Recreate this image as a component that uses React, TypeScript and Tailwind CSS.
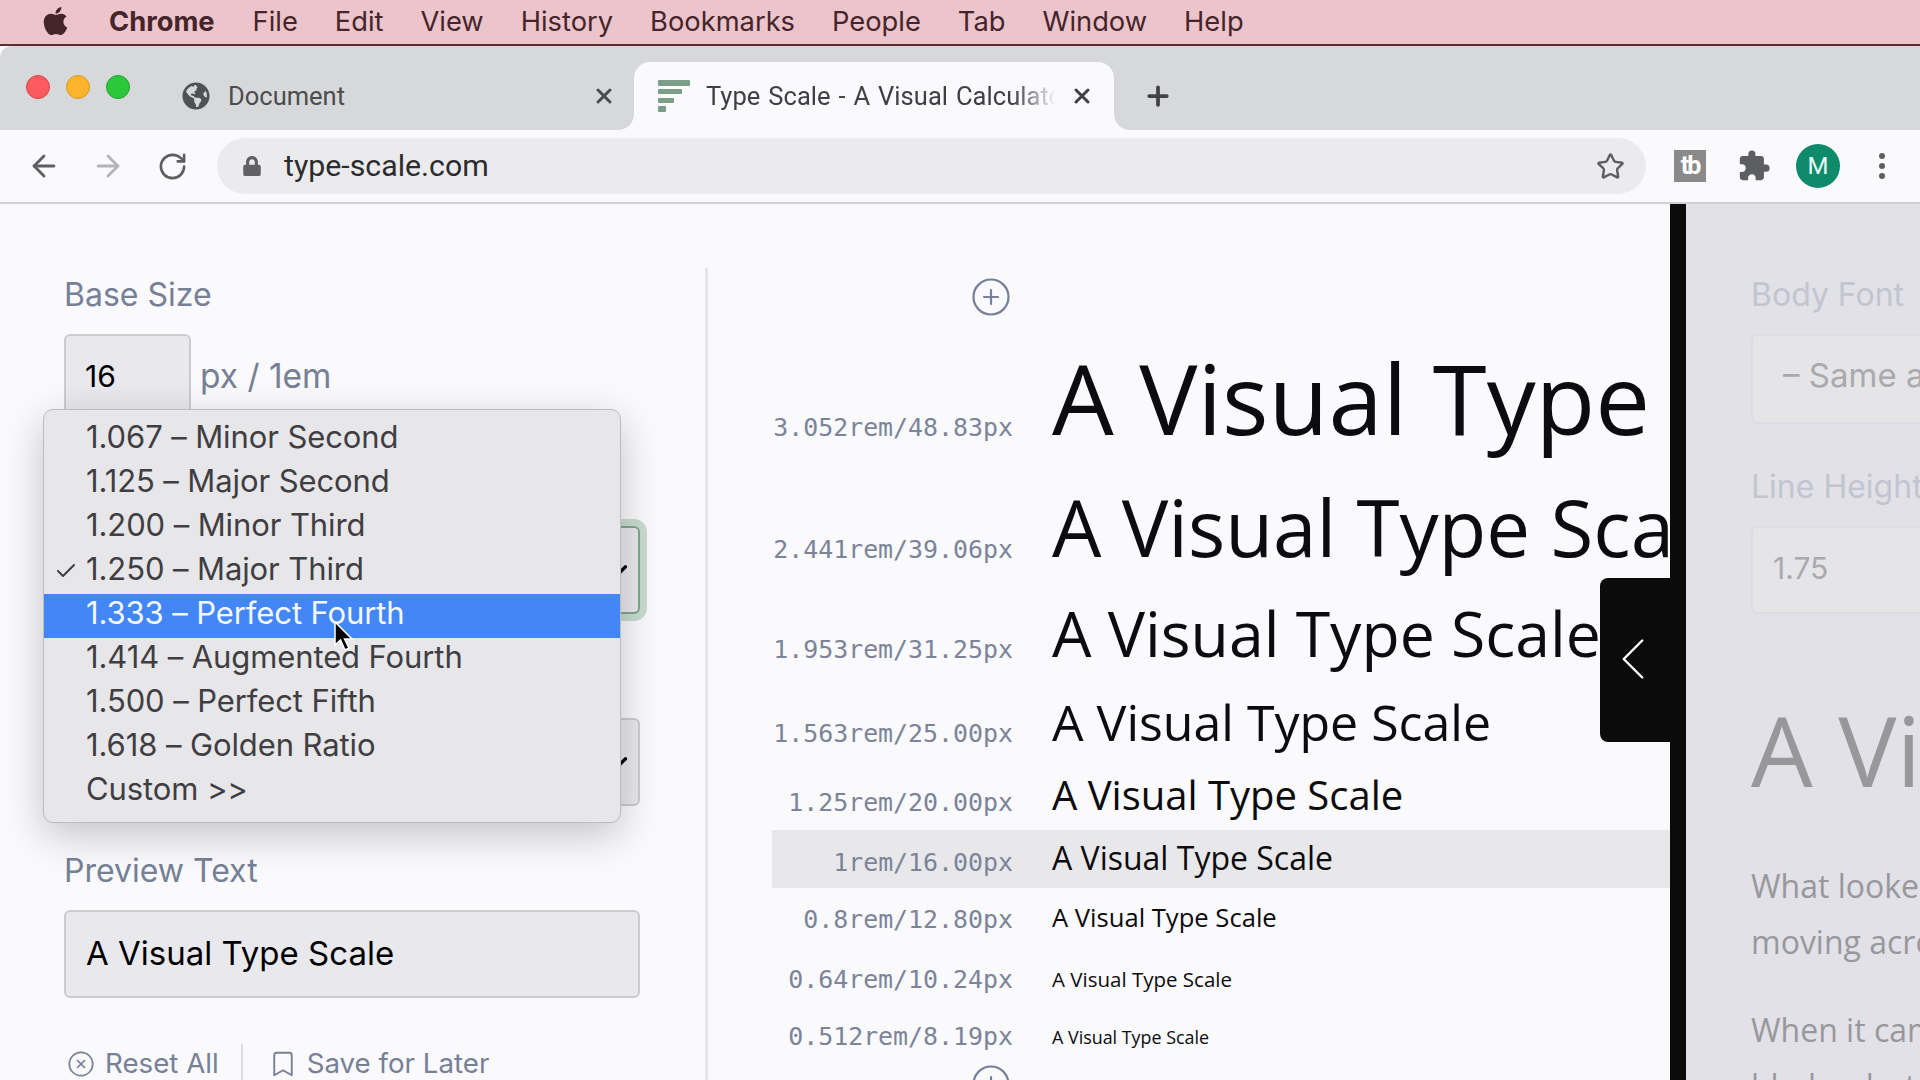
import React from "react";
import {
  ArrowLeft,
  ArrowRight,
  Bookmark,
  Check,
  ChevronDown,
  ChevronLeft,
  CirclePlus,
  CircleX,
  Plus,
  RotateCw,
  Star,
  X,
} from "lucide-react";
import { FaApple, FaGlobeAmericas, FaLock } from "react-icons/fa";
import { MdExtension } from "react-icons/md";

const menuItems = ["File", "Edit", "View", "History", "Bookmarks", "People", "Tab", "Window", "Help"];

const scaleOptions = [
  "1.067 – Minor Second",
  "1.125 – Major Second",
  "1.200 – Minor Third",
  "1.250 – Major Third",
  "1.333 – Perfect Fourth",
  "1.414 – Augmented Fourth",
  "1.500 – Perfect Fifth",
  "1.618 – Golden Ratio",
  "Custom >>",
];

const typeRows = [
  { label: "3.052rem/48.83px", row: "h-[140px]", text: "text-[97.7px] leading-[96px]" },
  { label: "2.441rem/39.06px", row: "h-[110px]", text: "text-[78.1px] leading-[75px]" },
  { label: "1.953rem/31.25px", row: "h-[90px]", text: "text-[62.5px] leading-[65px]" },
  { label: "1.563rem/25.00px", row: "h-[80px]", text: "text-[50px] leading-[65px]" },
  { label: "1.25rem/20.00px", row: "h-[60px]", text: "text-[40px] leading-[49px]" },
  { label: "1rem/16.00px", row: "h-[58px] bg-[#e8e8eb]", text: "text-[32px] leading-[55px]" },
  { label: "0.8rem/12.80px", row: "h-[59px]", text: "text-[25.6px] leading-[60px]" },
  { label: "0.64rem/10.24px", row: "h-[58px]", text: "text-[20.5px] leading-[64px]" },
  { label: "0.512rem/8.19px", row: "h-[58px]", text: "text-[17.9px] leading-[64px]" },
];

const poppins = "font-['Inter','Liberation_Sans',sans-serif]";

function Favicon() {
  return (
    <svg width="32" height="32" viewBox="0 0 32 32" className="shrink-0 fill-[#7a9e88]">
      <rect x="0" y="0" width="32" height="6" rx="1" />
      <rect x="0" y="9" width="24" height="5" rx="1" />
      <rect x="0" y="18" width="16" height="5" rx="1" />
      <rect x="0" y="26" width="8" height="6" rx="1" />
    </svg>
  );
}

function Cursor() {
  return (
    <svg width="24" height="32" viewBox="0 0 24 32" className="absolute left-[333px] top-[417px]">
      <path d="M2 1 L2 24 L7.5 19 L12 29 L16 27 L11.5 18 L19 18 Z" fill="#000" stroke="#fff" strokeWidth="1.5" />
    </svg>
  );
}

export default function App() {
  return (
    <div className="flex h-screen w-full flex-col overflow-hidden bg-[#faf9fc] font-['Roboto',sans-serif]">
      {/* mac menu bar */}
      <div className="flex h-[46px] shrink-0 items-center border-b-2 border-[#5a2e33] bg-[#ecc4cb] pl-[42px] font-['Inter',sans-serif] text-[27.3px] text-[#45252a]">
        <FaApple className="mb-[3px] mr-[40px] h-[32px] w-[27px]" />
        <span className="mr-[38px] font-bold">Chrome</span>
        <div className="flex gap-[37px]">
          {menuItems.map((item) => (
            <span key={item}>{item}</span>
          ))}
        </div>
      </div>

      {/* tab strip */}
      <div className="flex h-[84px] shrink-0 rounded-tl-xl bg-[#d6d8da]">
        <div className="flex w-[182px] items-center gap-[16px] pb-[2px] pl-[26px]">
          <span className="h-[24px] w-[24px] rounded-full border border-[#d9434a] bg-[#fd5b5f]" />
          <span className="h-[24px] w-[24px] rounded-full border border-[#d99a22] bg-[#fdb42d]" />
          <span className="h-[24px] w-[24px] rounded-full border border-[#22a32f] bg-[#2bc83c]" />
        </div>
        <div className="flex w-[452px] items-center pt-[16px] text-[25.5px] text-[#4b4c4e]">
          <FaGlobeAmericas className="h-[28px] w-[28px] shrink-0 text-[#505153]" />
          <span className="ml-[18px] flex-1">Document</span>
          <X className="mr-[18px] h-[24px] w-[24px]" strokeWidth={3} />
        </div>
        <div className="relative mt-[16px] flex h-[68px] w-[480px] items-center rounded-t-2xl bg-[#faf9fc] pl-[24px] text-[25.5px] tracking-[0.05px] text-[#3f4043] [word-spacing:1.5px]">
          <div className="absolute bottom-0 left-[-16px] h-[16px] w-[16px] bg-[#faf9fc]">
            <div className="h-full w-full rounded-br-2xl bg-[#d6d8da]" />
          </div>
          <div className="absolute bottom-0 right-[-16px] h-[16px] w-[16px] bg-[#faf9fc]">
            <div className="h-full w-full rounded-bl-2xl bg-[#d6d8da]" />
          </div>
          <Favicon />
          <span className="ml-[16px] w-[350px] overflow-hidden whitespace-nowrap [mask-image:linear-gradient(to_right,black_88%,transparent)]">
            Type Scale - A Visual Calculator
          </span>
          <X className="ml-[14px] h-[24px] w-[24px]" strokeWidth={3} />
        </div>
        <div className="flex flex-1 items-center pl-[29px] pt-[16px] text-[#404144]">
          <Plus className="h-[30px] w-[30px]" strokeWidth={3} />
        </div>
      </div>

      {/* toolbar */}
      <div className="flex h-[74px] shrink-0 items-center border-b-2 border-[#d0d0d4] bg-[#faf9fc]">
        <div className="flex w-[217px] items-center pl-[27px]">
          <ArrowLeft className="h-[34px] w-[34px] text-[#5d5e60]" strokeWidth={2} />
          <ArrowRight className="ml-[30px] h-[34px] w-[34px] text-[#b4b5b7]" strokeWidth={2} />
          <RotateCw className="ml-[32px] h-[31px] w-[31px] text-[#5d5e60]" strokeWidth={2} />
        </div>
        <div className="flex h-[56px] w-[1429px] items-center rounded-full bg-[#ebebed] pl-[26px] pr-[21px] text-[30.3px] text-[#2c2c2e]">
          <FaLock className="h-[20px] w-[18px] text-[#616163]" />
          <span className="ml-[23px] flex-1">type-scale.com</span>
          <Star className="h-[29px] w-[29px] text-[#5d5e60]" strokeWidth={2} />
        </div>
        <div className="ml-[28px] flex h-[32px] w-[32px] items-center justify-center bg-[#8a8a8b] text-[25px] font-bold tracking-[-2px] text-white">
          tb
        </div>
        <MdExtension className="ml-[31px] h-[34px] w-[34px] text-[#5d5e60]" />
        <div className="ml-[25px] flex h-[44px] w-[44px] items-center justify-center rounded-full bg-[#0f8a6b] text-[24px] text-[#e6fff6]">
          M
        </div>
        <div className="ml-[39px] flex flex-col gap-[4px]">
          <span className="h-[6px] w-[6px] rounded-full bg-[#5d5e60]" />
          <span className="h-[6px] w-[6px] rounded-full bg-[#5d5e60]" />
          <span className="h-[6px] w-[6px] rounded-full bg-[#5d5e60]" />
        </div>
      </div>

      {/* page */}
      <div className="relative flex min-h-0 flex-1 overflow-hidden">
        {/* controls */}
        <div className="w-[708px] shrink-0 pt-[64px]">
          <div className={`h-[900px] border-r-[3px] border-[#e3e3ea] pl-[64px] pr-[65px] ${poppins}`}>
            <div className="pt-[1px] text-[32px] leading-[52px] text-[#768096]">Base Size</div>
            <div className="mt-[13px] flex items-center">
              <div className="flex h-[90px] w-[127px] items-center rounded-md border-2 border-[#cbccd2] bg-[#e9e9ed] pb-[6px] pl-[19px] text-[30px] text-black">
                16
              </div>
              <span className="ml-[9px] pb-[6px] text-[33.5px] text-[#768096]">px / 1em</span>
            </div>
            <div className="mt-[36px] h-[52px]" />
            <div className="mt-[14px] flex h-[88px] items-center justify-end rounded-md border-2 border-[#7fa68f] bg-[#e9e9ed] pr-[6px] ring-[7px] ring-[#c9dcd1]">
              <ChevronDown className="h-[26px] w-[26px] text-black" strokeWidth={3} />
            </div>
            <div className="mt-[36px] h-[52px]" />
            <div className="mt-[16px] flex h-[88px] items-center justify-end rounded-md border-2 border-[#cbccd2] bg-[#e9e9ed] pr-[6px]">
              <ChevronDown className="h-[26px] w-[26px] text-black" strokeWidth={3} />
            </div>
            <div className="mt-[38px] pt-[1px] text-[32px] leading-[52px] text-[#768096]">Preview Text</div>
            <div className="mt-[13px] flex h-[88px] items-center rounded-md border-2 border-[#cbccd2] bg-[#e9e9ed] pl-[20px] text-[33px] text-black">
              A Visual Type Scale
            </div>
            <div className="mt-[45px] flex h-[40px] items-center pt-[1px] text-[27.7px] text-[#768096]">
              <CircleX className="ml-[3px] h-[28px] w-[28px]" strokeWidth={1.5} />
              <span className="ml-[10px]">Reset All</span>
              <span className="ml-[22px] h-[60px] w-[2px] self-start bg-[#dcdce2]" />
              <Bookmark className="ml-[25px] h-[30px] w-[30px]" strokeWidth={1.5} />
              <span className="ml-[9px]">Save for Later</span>
            </div>
          </div>
        </div>

        {/* scale rows */}
        <div className="w-[962px] shrink-0 overflow-hidden">
          <div className="flex h-[146px] justify-start pl-[262px] pt-[72px]">
            <CirclePlus className="h-[42px] w-[42px] text-[#76809a]" strokeWidth={1.25} />
          </div>
          {typeRows.map((row) => (
            <div key={row.label} className={`ml-[64px] flex items-baseline ${row.row}`}>
              <span className="w-[241px] shrink-0 translate-y-px text-right font-['DejaVu_Sans_Mono',monospace] text-[24.9px] text-[#7b8499]">
                {row.label}
              </span>
              <span className={`ml-[39px] whitespace-nowrap font-['Open_Sans',sans-serif] text-[#0c0c0e] ${row.text}`}>
                A Visual Type Scale
              </span>
            </div>
          ))}
          <div className="flex justify-start pl-[262px]">
            <CirclePlus className="h-[42px] w-[42px] text-[#76809a]" strokeWidth={1.25} />
          </div>
        </div>

        <div className="w-[16px] shrink-0 bg-[#0b0b0c]" />

        {/* dimmed preview panel */}
        <div className="min-w-0 flex-1 overflow-hidden whitespace-nowrap bg-[#e1e1e7] pl-[65px] pt-[64px]">
          <div className={`pt-[1px] text-[32px] leading-[52px] text-[#c2c5cf] ${poppins}`}>Body Font</div>
          <div className={`mt-[13px] flex h-[90px] w-[300px] items-center rounded-md border-2 border-[#dcdce4] bg-[#e5e5e8] pb-[6px] pl-[30px] text-[33px] text-[#a9a9ae] ${poppins}`}>
            – Same as Headings
          </div>
          <div className={`mt-[36px] pt-[1px] text-[32px] leading-[52px] text-[#c2c5cf] ${poppins}`}>Line Height</div>
          <div className={`mt-[13px] flex h-[88px] w-[300px] items-center rounded-md border-2 border-[#dcdce4] bg-[#e5e5e8] pb-[4px] pl-[20px] text-[30px] text-[#a9a9ae] ${poppins}`}>
            1.75
          </div>
          <div className="mt-[86px] font-['Open_Sans',sans-serif] text-[97.7px] leading-[100px] text-[#98989c]">
            A Visual Type Scale
          </div>
          <div className="mt-[58px] font-['Open_Sans',sans-serif] text-[32px] leading-[56px] text-[#98989c]">
            <div>What looked like a small patch</div>
            <div>moving across the sand</div>
            <div className="mt-[32px]">When it came near enough</div>
            <div>blades, but only purple roots</div>
          </div>
        </div>

        {/* panel toggle */}
        <div className="absolute left-[1600px] top-[374px] flex h-[164px] w-[70px] items-center rounded-l-lg bg-[#0b0b0c] pb-[2px]">
          <ChevronLeft className="ml-[-4px] h-[76px] w-[76px] text-white" strokeWidth={0.8} />
        </div>

        {/* native select menu */}
        <div className="absolute left-[43px] top-[205px] w-[578px] rounded-[10px] border border-[#bcbbbf] bg-[#e7e6e9] pb-[8px] pt-[8px] text-[31px] text-[#403e42] shadow-[0_12px_40px_rgba(0,0,0,0.22)]">
          {scaleOptions.map((option, i) => (
            <div
              key={option}
              className={`relative flex h-[44px] items-center pb-[6px] pl-[42px] font-['Inter',sans-serif] tracking-[-0.1px] ${
                i === 4 ? "bg-[#4287f5] text-[#f3f7ff]" : ""
              }`}
            >
              {i === 3 && <Check className="absolute left-[10px] top-[9px] h-[24px] w-[24px]" strokeWidth={2} />}
              {option}
            </div>
          ))}
        </div>
        <Cursor />
      </div>
    </div>
  );
}
